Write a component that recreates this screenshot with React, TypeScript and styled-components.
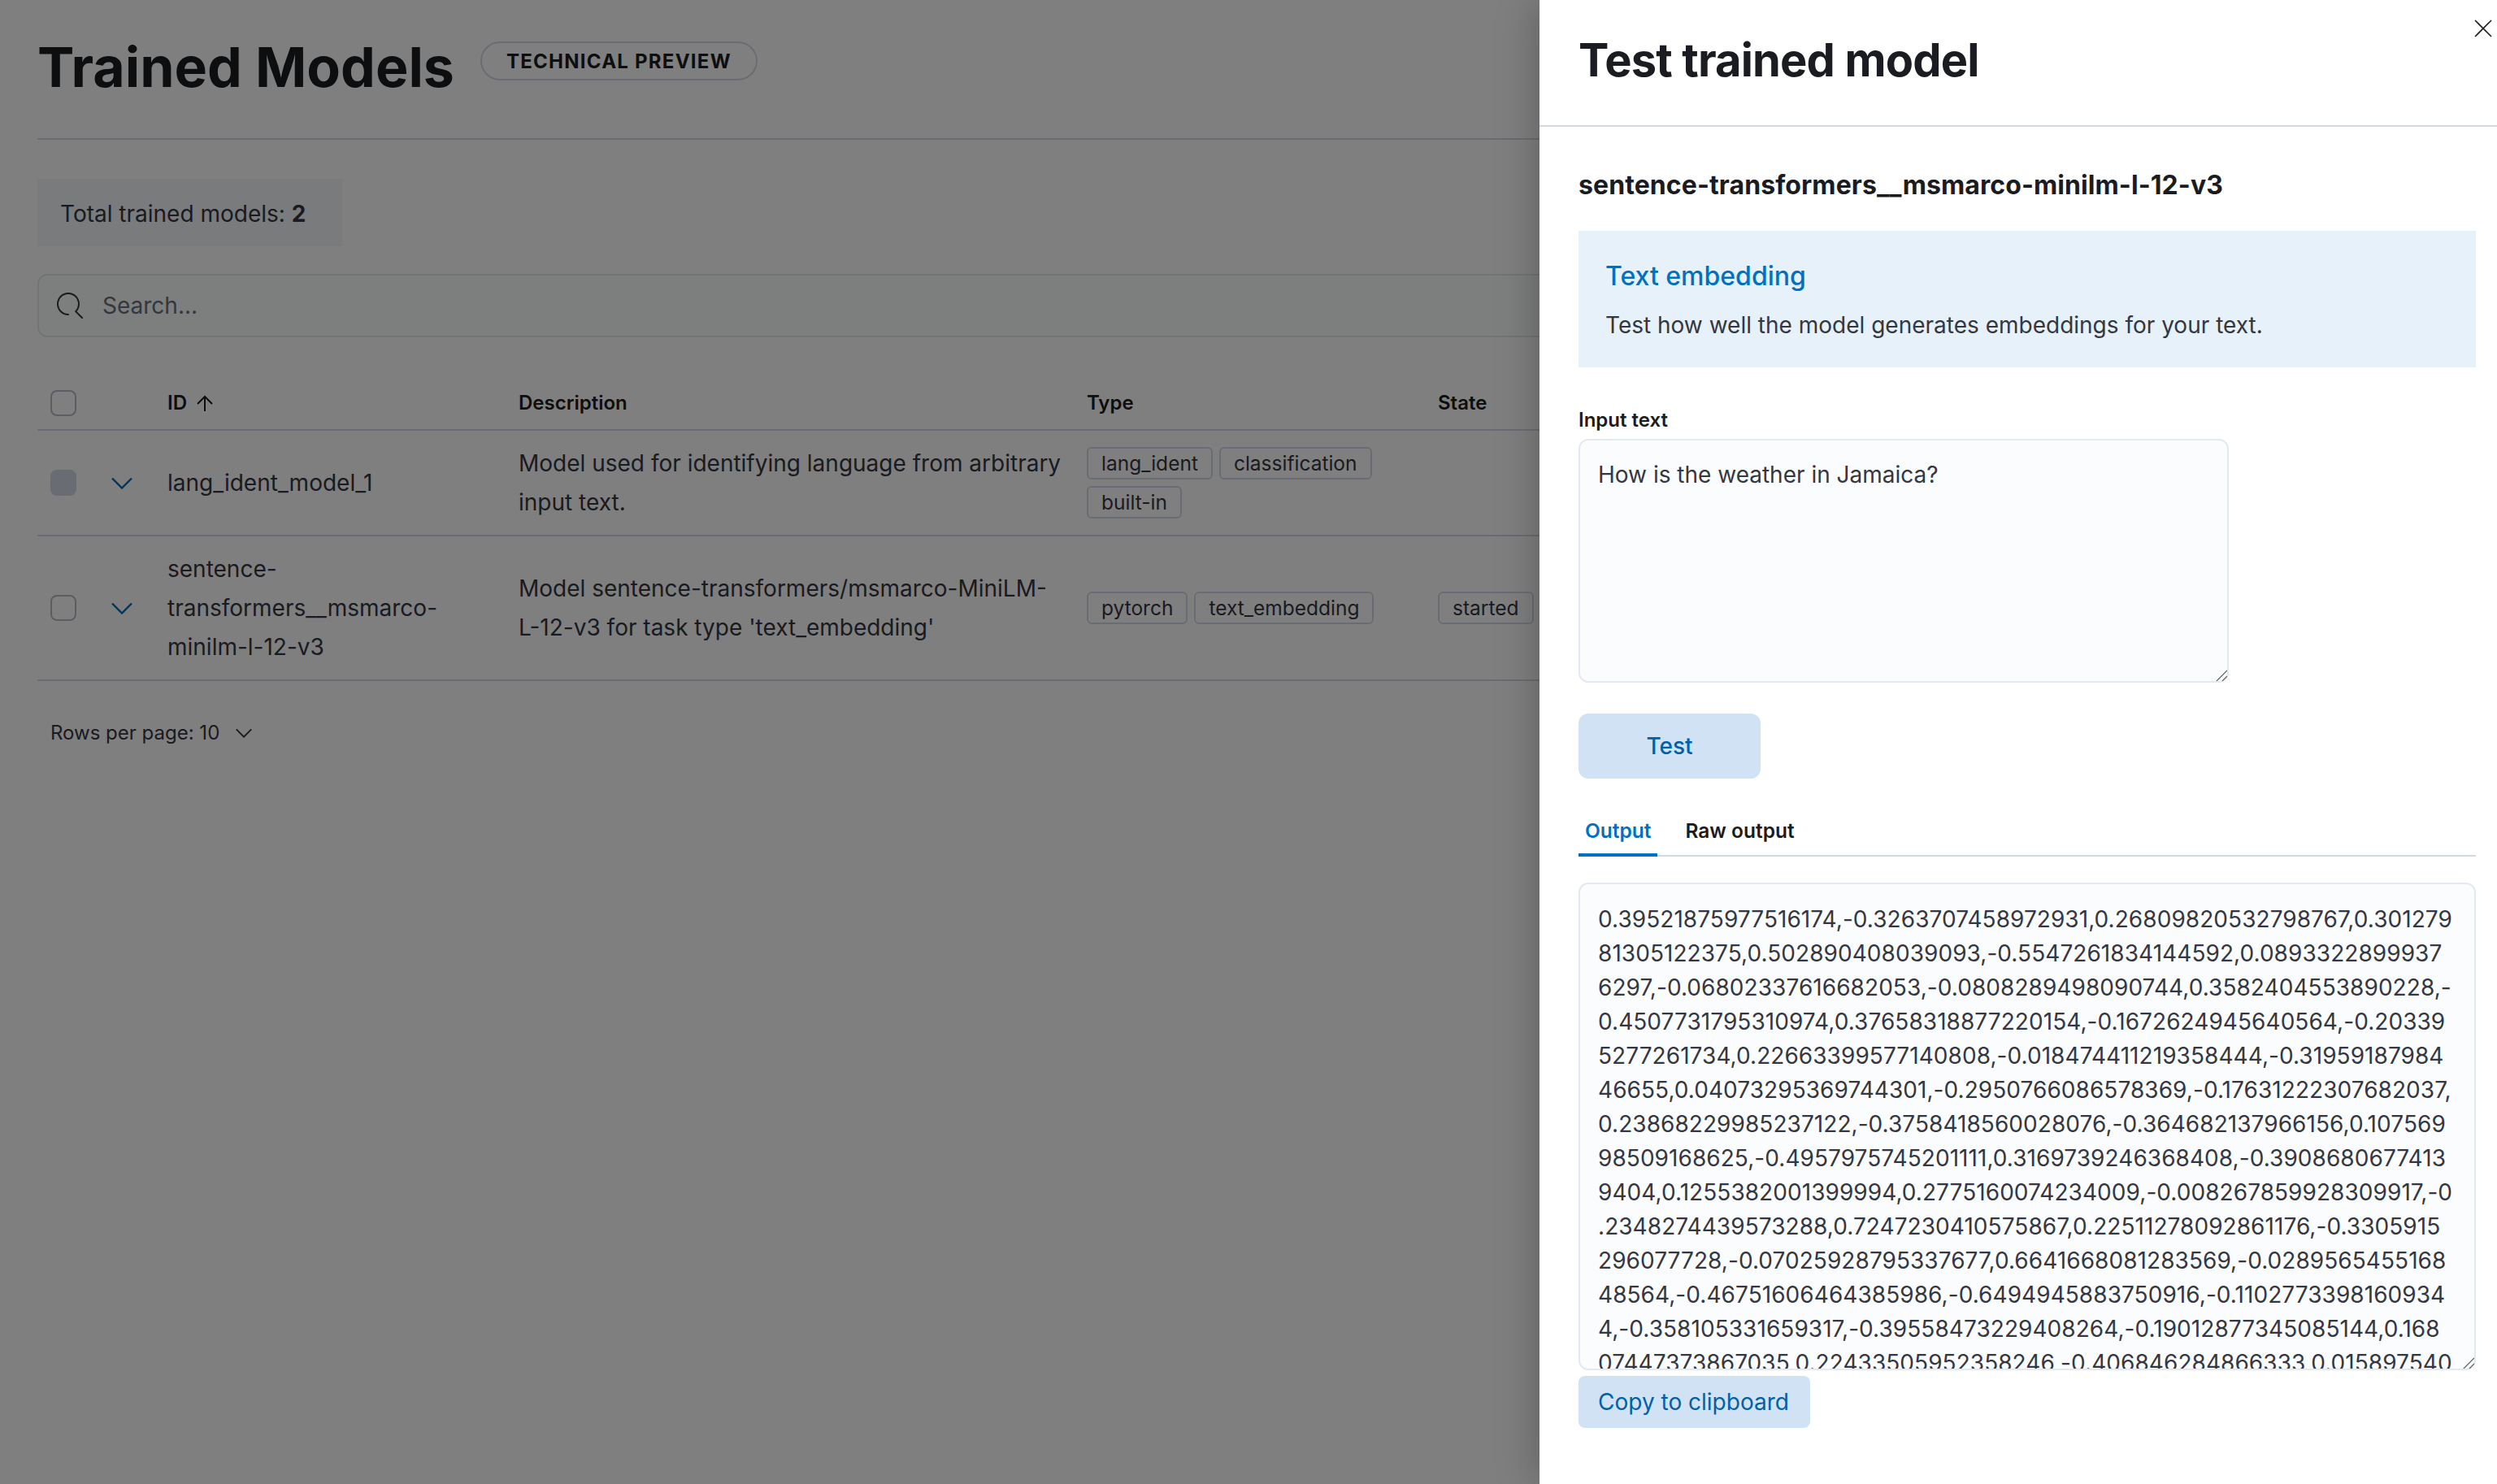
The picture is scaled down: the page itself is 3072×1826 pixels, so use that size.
import React from 'react';
import styled, { createGlobalStyle } from 'styled-components';

// line breaks taken from the panel, the value has no spaces to wrap on
const OUTPUT_LINES = [
    '0.39521875977516174,-0.3263707458972931,0.26809820532798767,0.301279',
    '81305122375,0.502890408039093,-0.5547261834144592,0.0893322899937',
    '6297,-0.06802337616682053,-0.0808289498090744,0.3582404553890228,-',
    '0.4507731795310974,0.37658318877220154,-0.1672624945640564,-0.20339',
    '5277261734,0.22663399577140808,-0.018474411219358444,-0.31959187984',
    '46655,0.04073295369744301,-0.2950766086578369,-0.17631222307682037,',
    '0.23868229985237122,-0.3758418560028076,-0.364682137966156,0.107569',
    '98509168625,-0.4957975745201111,0.3169739246368408,-0.3908680677413',
    '9404,0.1255382001399994,0.2775160074234009,-0.008267859928309917,-0',
    '.2348274439573288,0.7247230410575867,0.22511278092861176,-0.3305915',
    '296077728,-0.07025928795337677,0.6641668081283569,-0.0289565455168',
    '48564,-0.46751606464385986,-0.6494945883750916,-0.1102773398160934',
    '4,-0.358105331659317,-0.39558473229408264,-0.19012877345085144,0.168',
    '07447373867035,0.22433505952358246,-0.406846284866333,0.015897540',
    '37559032,-0.2175430804491043,0.3310714662075043,-0.1240915060043335',
];

const GlobalStyle = createGlobalStyle`
    html, body {
        margin: 0;
        height: 100%;
        overflow: hidden;
        background: #ffffff;
    }
    body {
        font-family: "Inter", "Liberation Sans", sans-serif;
        font-size: 28px;
        color: #343741;
    }
    * {
        box-sizing: border-box;
    }
`;

const Page = styled.div`
    position: relative;
    width: 3072px;
    height: 1826px;
    overflow: hidden;
`;

const Main = styled.main`
    padding: 0 0 0 46px;
`;

const PageHeader = styled.header`
    display: flex;
    align-items: flex-start;
    gap: 32px;
    height: 172px;
    padding-top: 51px;
    border-bottom: 2px solid #d3dae6;
`;

const PageTitle = styled.h1`
    margin: 0;
    padding-top: 1px;
    font-size: 68px;
    line-height: 60px;
    font-weight: 700;
    color: #1a1c21;
`;

const PreviewBadge = styled.span`
    display: inline-flex;
    align-items: center;
    height: 48px;
    padding: 0 30px;
    border: 2px solid #d3dae6;
    border-radius: 24px;
    font-size: 24px;
    font-weight: 700;
    letter-spacing: 1.25px;
    text-transform: uppercase;
    color: #1a1c21;
`;

const StatBox = styled.div`
    display: flex;
    align-items: center;
    width: 375px;
    height: 83px;
    margin-top: 48px;
    padding: 3px 0 0 28px;
    background: #f5f7fa;
    b {
        font-weight: 700;
        margin-left: 8px;
    }
`;

const SearchBar = styled.div`
    display: flex;
    align-items: center;
    gap: 24px;
    height: 78px;
    margin-top: 34px;
    margin-bottom: 31px;
    padding-left: 22px;
    background: #fbfcfd;
    border: 2px solid #e4e8f0;
    border-radius: 12px;
    color: #69707d;
`;

const TableRow = styled.div<{ $height: number; $header?: boolean }>`
    display: grid;
    grid-template-columns: 160px 432px 699px 432px 1fr;
    align-items: center;
    height: ${p => p.$height}px;
    padding-top: ${p => (p.$header ? '17px' : '0')};
    border-bottom: 2px solid #d3dae6;
    line-height: 48px;
`;

const HeaderLabel = styled.div`
    display: flex;
    align-items: center;
    gap: 10px;
    font-size: 24px;
    font-weight: 600;
    color: #1a1c21;
`;

const SelectCell = styled.div`
    display: flex;
    align-items: center;
    gap: 43px;
    padding-left: 16px;
`;

const CheckBox = styled.span<{ $disabled?: boolean }>`
    display: block;
    width: 32px;
    height: 32px;
    border-radius: 8px;
    border: 2px solid ${p => (p.$disabled ? '#d3dae6' : '#b5bac4')};
    background: ${p => (p.$disabled ? '#d3dae6' : '#ffffff')};
`;

const TextCell = styled.div<{ $wide?: boolean }>`
    padding-right: ${p => (p.$wide ? '30px' : '16px')};
    overflow-wrap: break-word;
`;

const TagList = styled.div`
    display: flex;
    flex-wrap: wrap;
    gap: 8px;
    padding-right: 16px;
`;

const Tag = styled.span`
    display: inline-flex;
    align-items: center;
    height: 40px;
    padding: 0 16px;
    border: 2px solid #d3dae6;
    border-radius: 6px;
    font-size: 24.5px;
    line-height: 36px;
    color: #343741;
`;

const Pagination = styled.div`
    display: flex;
    align-items: center;
    gap: 20px;
    margin: 46px 0 0 16px;
    font-size: 24px;
    line-height: 36px;
`;

const Overlay = styled.div`
    position: absolute;
    inset: 0;
    background: rgba(0, 0, 0, 0.5);
`;

const Flyout = styled.aside`
    position: absolute;
    top: 0;
    right: 0;
    bottom: 0;
    width: 1178px;
    background: #ffffff;
    box-shadow: 0 0 50px rgba(0, 0, 0, 0.28);
`;

const CloseButton = styled.button`
    position: absolute;
    top: 24px;
    right: 6px;
    padding: 0;
    width: 22px;
    height: 22px;
    background: none;
    border: 0;
    color: #1a1c21;
`;

const FlyoutHeader = styled.header`
    display: flex;
    align-items: center;
    height: 156px;
    padding: 0 0 6px 48px;
    border-bottom: 2px solid #d3dae6;
`;

const FlyoutTitle = styled.h2`
    margin: 0;
    font-size: 56px;
    line-height: 68px;
    font-weight: 700;
    letter-spacing: -0.85px;
    color: #1a1c21;
`;

const FlyoutBody = styled.div`
    padding: 52px 26px 0 48px;
`;

const ModelName = styled.h3`
    margin: 0;
    font-size: 32px;
    line-height: 40px;
    font-weight: 700;
    letter-spacing: 0.09px;
    color: #1a1c21;
`;

const Callout = styled.section`
    margin-top: 36px;
    height: 168px;
    padding: 32px 32px 28px 33px;
    background: #e6f1fa;
`;

const CalloutTitle = styled.div`
    font-size: 32px;
    line-height: 48px;
    font-weight: 500;
    color: #0071c2;
`;

const CalloutText = styled.div`
    margin-top: 12px;
    line-height: 48px;
    color: #343741;
`;

const FieldLabel = styled.label`
    display: block;
    margin-top: 49px;
    font-size: 24px;
    line-height: 32px;
    font-weight: 600;
    color: #1a1c21;
`;

const TextAreaWrap = styled.div<{ $output?: boolean }>`
    position: relative;
    width: ${p => (p.$output ? '1104px' : '800px')};
    height: ${p => (p.$output ? '600px' : '300px')};
    margin-top: ${p => (p.$output ? '32px' : '7px')};
`;

const TextArea = styled.textarea<{ $output?: boolean }>`
    display: block;
    width: 100%;
    height: 100%;
    padding: ${p => (p.$output ? '22px 10px 0 22px' : '18px 22px')};
    background: #fbfcfd;
    border: 2px solid #e4e8f0;
    border-radius: 12px;
    font: inherit;
    font-size: 28px;
    line-height: ${p => (p.$output ? '42px' : '48px')};
    letter-spacing: ${p => (p.$output ? '0.06px' : '0')};
    color: #343741;
    outline: none;
    resize: none;
    overflow: hidden;
    white-space: ${p => (p.$output ? 'pre' : 'pre-wrap')};
`;

const ResizeGrip = styled.svg`
    position: absolute;
    right: 2px;
    bottom: 2px;
`;

const TestButton = styled.button`
    display: block;
    width: 224px;
    height: 80px;
    margin-top: 38px;
    background: #d0e2f4;
    border: 0;
    border-radius: 12px;
    font: inherit;
    font-weight: 500;
    color: #0061a6;
`;

const TabBar = styled.nav`
    display: flex;
    height: 56px;
    margin-top: 40px;
    border-bottom: 2px solid #d3dae6;
`;

const Tab = styled.div<{ $active?: boolean }>`
    height: 56px;
    padding: 0 8px;
    margin-right: ${p => (p.$active ? '26px' : '0')};
    font-size: 24.5px;
    line-height: 48px;
    font-weight: 600;
    color: ${p => (p.$active ? '#0071c2' : '#1a1c21')};
    border-bottom: ${p => (p.$active ? '4px solid #0071c2' : '0')};
`;

const CopyButton = styled.button`
    display: block;
    width: 285px;
    height: 64px;
    margin-top: 7px;
    padding: 0 2px 0 0;
    background: #d0e2f4;
    border: 0;
    border-radius: 8px;
    font: inherit;
    color: #0061a6;
`;

const Chevron = ({ size = 26, color = '#006bb4' }: { size?: number; color?: string }) => (
    <svg width={size} height={size / 2 + 2} viewBox="0 0 26 14" fill="none">
        <path d="M1 1l12 12L25 1" stroke={color} strokeWidth={size > 22 ? 2.4 : 2.6} />
    </svg>
);

const Grip = () => (
    <ResizeGrip width="14" height="14" viewBox="0 0 14 14" fill="none" stroke="#5a5d63" strokeWidth="1.2">
        <path d="M1 14L14 1M8 14l6-6" />
    </ResizeGrip>
);

const App = () => {
    return (
        <Page>
            <GlobalStyle />
            <Main>
                <PageHeader>
                    <PageTitle>Trained Models</PageTitle>
                    <PreviewBadge>Technical preview</PreviewBadge>
                </PageHeader>
                <StatBox>
                    Total trained models:<b>2</b>
                </StatBox>
                <SearchBar>
                    <svg width="32" height="32" viewBox="0 0 16 16" fill="#343741">
                        <path d="M11.271 11.978l3.872 3.873a.502.502 0 00.708 0 .502.502 0 000-.708l-3.565-3.564c2.38-2.747 2.267-6.923-.342-9.532-2.73-2.73-7.17-2.73-9.898 0-2.728 2.729-2.728 7.17 0 9.9a6.955 6.955 0 004.949 2.05.5.5 0 000-1 5.96 5.96 0 01-4.242-1.757 6.01 6.01 0 010-8.486 6.004 6.004 0 018.484 0 6.01 6.01 0 010 8.486.5.5 0 00.034.738z" />
                    </svg>
                    Search...
                </SearchBar>
                <TableRow $height={84} $header>
                    <SelectCell>
                        <CheckBox />
                    </SelectCell>
                    <HeaderLabel>
                        ID
                        <svg width="24" height="20" viewBox="0 0 24 20" fill="none" stroke="#1a1c21" strokeWidth="2">
                            <path d="M12 20V2M3 11l9-9 9 9" />
                        </svg>
                    </HeaderLabel>
                    <HeaderLabel>Description</HeaderLabel>
                    <HeaderLabel>Type</HeaderLabel>
                    <HeaderLabel>State</HeaderLabel>
                </TableRow>
                <TableRow $height={130}>
                    <SelectCell>
                        <CheckBox $disabled />
                        <Chevron />
                    </SelectCell>
                    <TextCell>lang_ident_model_1</TextCell>
                    <TextCell $wide>Model used for identifying language from arbitrary input text.</TextCell>
                    <TagList>
                        <Tag>lang_ident</Tag>
                        <Tag>classification</Tag>
                        <Tag>built-in</Tag>
                    </TagList>
                    <div />
                </TableRow>
                <TableRow $height={178}>
                    <SelectCell>
                        <CheckBox />
                        <Chevron />
                    </SelectCell>
                    <TextCell>sentence-transformers__msmarco-minilm-l-12-v3</TextCell>
                    <TextCell $wide>
                        Model sentence-transformers/msmarco-MiniLM-L-12-v3 for task type 'text_embedding'
                    </TextCell>
                    <TagList>
                        <Tag>pytorch</Tag>
                        <Tag>text_embedding</Tag>
                    </TagList>
                    <TagList>
                        <Tag>started</Tag>
                    </TagList>
                </TableRow>
                <Pagination>
                    Rows per page: 10
                    <Chevron size={20} color="#343741" />
                </Pagination>
            </Main>
            <Overlay />
            <Flyout>
                <CloseButton aria-label="Close">
                    <svg width="22" height="22" viewBox="0 0 22 22" fill="none" stroke="#1a1c21" strokeWidth="1.6">
                        <path d="M1 1l20 20M21 1L1 21" />
                    </svg>
                </CloseButton>
                <FlyoutHeader>
                    <FlyoutTitle>Test trained model</FlyoutTitle>
                </FlyoutHeader>
                <FlyoutBody>
                    <ModelName>sentence-transformers__msmarco-minilm-l-12-v3</ModelName>
                    <Callout>
                        <CalloutTitle>Text embedding</CalloutTitle>
                        <CalloutText>Test how well the model generates embeddings for your text.</CalloutText>
                    </Callout>
                    <FieldLabel>Input text</FieldLabel>
                    <TextAreaWrap>
                        <TextArea readOnly value="How is the weather in Jamaica?" />
                        <Grip />
                    </TextAreaWrap>
                    <TestButton>Test</TestButton>
                    <TabBar>
                        <Tab $active>Output</Tab>
                        <Tab>Raw output</Tab>
                    </TabBar>
                    <TextAreaWrap $output>
                        <TextArea $output readOnly value={OUTPUT_LINES.join('\n')} />
                        <Grip />
                    </TextAreaWrap>
                    <CopyButton>Copy to clipboard</CopyButton>
                </FlyoutBody>
            </Flyout>
        </Page>
    );
};

export default App;
